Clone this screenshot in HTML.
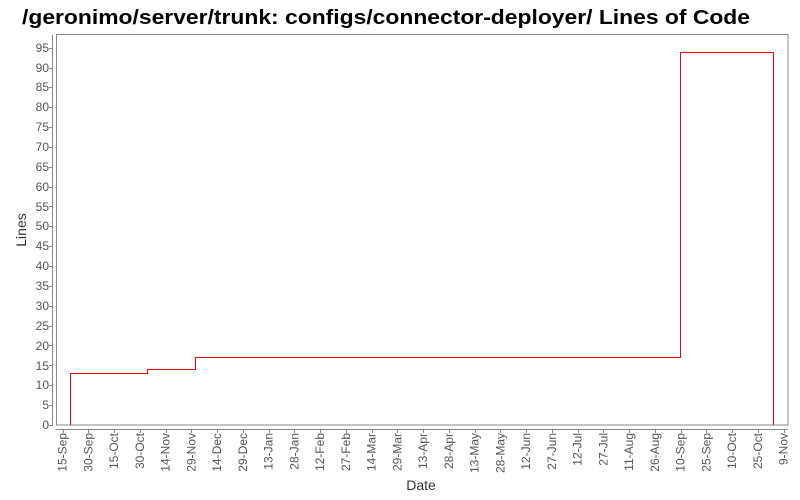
<!DOCTYPE html>
<html><head><style>body{margin:0;background:#fff}svg{display:block}</style></head><body>
<svg width="800" height="500" xmlns="http://www.w3.org/2000/svg" font-family="Liberation Sans, DejaVu Sans, sans-serif">
<text x="386" y="24" text-anchor="middle" font-size="20" font-weight="bold" textLength="728" lengthAdjust="spacingAndGlyphs">/geronimo/server/trunk: configs/connector-deployer/ Lines of Code</text>
<rect x="56.5" y="34.5" width="731.5" height="390.5" fill="#fff" stroke="#888" stroke-width="1"/>
<line x1="52.5" y1="35" x2="52.5" y2="425" stroke="#888"/>
<line x1="56" y1="429.5" x2="788" y2="429.5" stroke="#888"/>
<g font-size="12" fill="#555" text-anchor="end" id="y">
<script>/*placeholder*/</script>
</g>
<g id="yl" font-size="12" fill="#555" text-anchor="end">
<text x="49" y="429">0</text><text x="49" y="409">5</text><text x="49" y="389">10</text><text x="49" y="370">15</text><text x="49" y="350">20</text><text x="49" y="330">25</text><text x="49" y="310">30</text><text x="49" y="290">35</text><text x="49" y="270">40</text><text x="49" y="250">45</text><text x="49" y="230">50</text><text x="49" y="211">55</text><text x="49" y="191">60</text><text x="49" y="171">65</text><text x="49" y="151">70</text><text x="49" y="131">75</text><text x="49" y="111">80</text><text x="49" y="91">85</text><text x="49" y="72">90</text><text x="49" y="52">95</text>
</g>
<g stroke="#888">
<path d="M49 425.5h4M49 405.5h4M49 385.5h4M49 365.5h4M49 345.5h4M49 326.5h4M49 306.5h4M49 286.5h4M49 266.5h4M49 246.5h4M49 226.5h4M49 206.5h4M49 187.5h4M49 167.5h4M49 147.5h4M49 127.5h4M49 107.5h4M49 87.5h4M49 68.5h4M49 48.5h4"/>
</g>
<g id="xt" font-size="12" fill="#555"></g>
<g stroke="#888" id="xtk"></g>
<path d="M70.5 425V373.5H147.5V369.5H195.5V357.5H680.5V52.5H773.5V425" fill="none" stroke="#f00" stroke-width="1"/>
<text x="421" y="490" text-anchor="middle" font-size="14" fill="#333">Date</text>
<text transform="translate(26,230) rotate(-90)" text-anchor="middle" font-size="14" fill="#333">Lines</text>
<script>
var L=["15-Sep","30-Sep","15-Oct","30-Oct","14-Nov","29-Nov","14-Dec","29-Dec","13-Jan","28-Jan","12-Feb","27-Feb","14-Mar","29-Mar","13-Apr","28-Apr","13-May","28-May","12-Jun","27-Jun","12-Jul","27-Jul","11-Aug","26-Aug","10-Sep","25-Sep","10-Oct","25-Oct","9-Nov"];
var g=document.getElementById('xt'),t=document.getElementById('xtk'),ns="http://www.w3.org/2000/svg";
L.forEach(function(s,i){var x=62.5+i*25.75;var e=document.createElementNS(ns,'text');e.setAttribute('transform','translate('+(x+4)+',433) rotate(-90)');e.setAttribute('text-anchor','end');e.textContent=s;g.appendChild(e);
var l=document.createElementNS(ns,'line');var xx=Math.round(x)+0.5;l.setAttribute('x1',xx);l.setAttribute('x2',xx);l.setAttribute('y1',429);l.setAttribute('y2',433);t.appendChild(l);});
</script>
</svg>
</body></html>
